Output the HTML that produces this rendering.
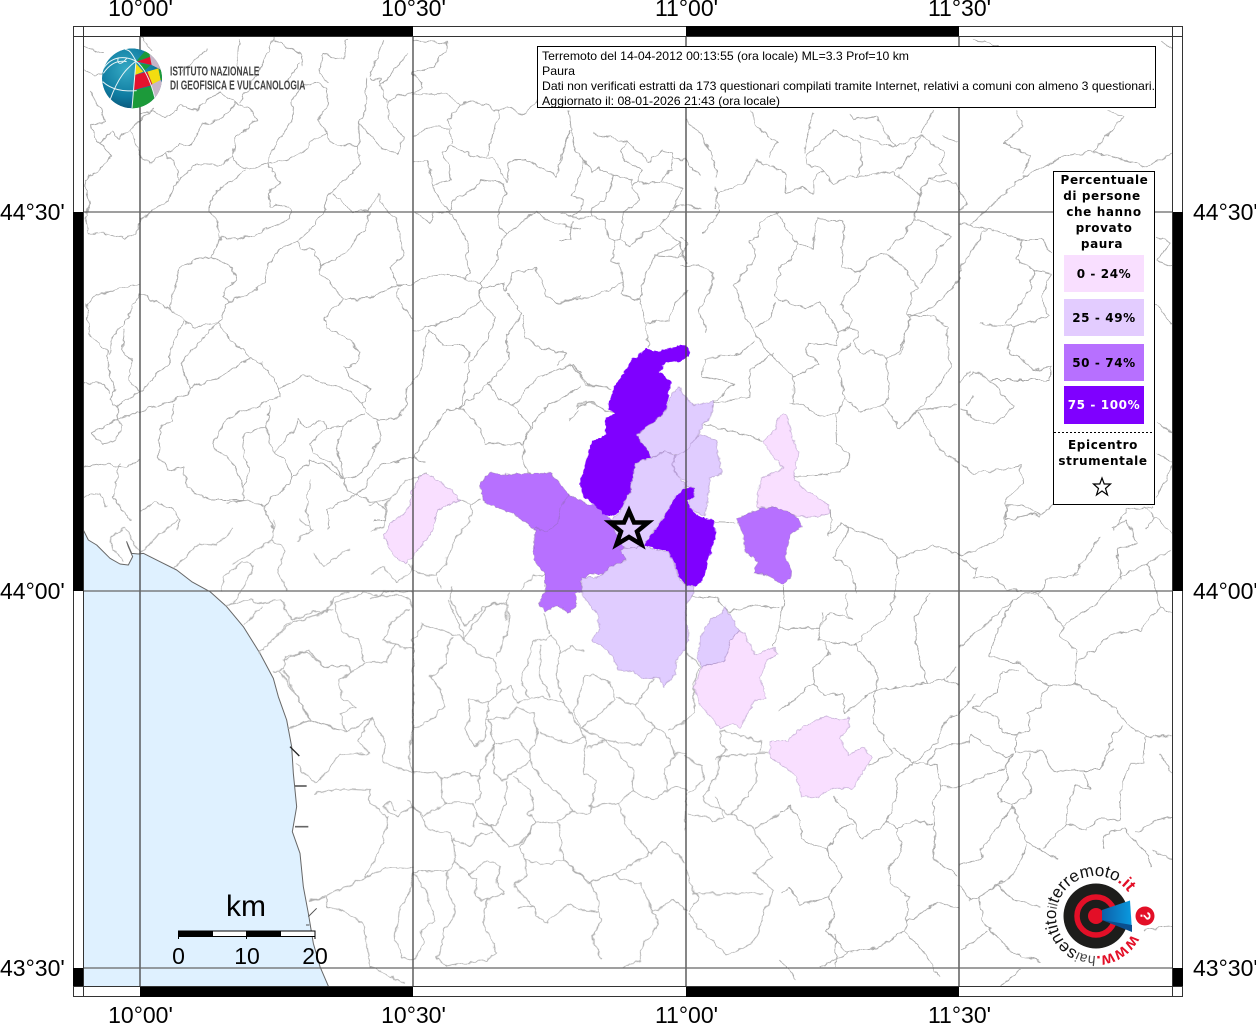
<!DOCTYPE html>
<html lang="it"><head><meta charset="utf-8"><title>Terremoto - Paura</title>
<style>
html,body{margin:0;padding:0;background:#fff}
svg{display:block}
.l{font-family:"Liberation Sans",Arial,sans-serif;font-size:23px;fill:#000}
.d{font-family:"DejaVu Sans",sans-serif;font-weight:bold;font-size:12px;text-anchor:middle;letter-spacing:.6px;fill:#000}
.t{font-family:"Liberation Sans",Arial,sans-serif;font-size:12px;fill:#000}
.n path{fill:none}
</style></head><body>
<svg width="1256" height="1024" viewBox="0 0 1256 1024" xmlns="http://www.w3.org/2000/svg">
<defs>
<clipPath id="m"><rect x="83" y="36" width="1090" height="951"/></clipPath>
<clipPath id="g"><circle cx="216" cy="235" r="90"/></clipPath>
<radialGradient id="gb" cx=".4" cy=".35" r=".75"><stop offset="0" stop-color="#35a9c4"/><stop offset=".6" stop-color="#0f7ba0"/><stop offset="1" stop-color="#0a4c6e"/></radialGradient>
<linearGradient id="cone" x1="0" y1="0" x2="1" y2="0"><stop offset="0" stop-color="#0d5fa8"/><stop offset="1" stop-color="#0a9be0"/></linearGradient>
<path id="arc" d="M1131.600,934.200 A40,40 0 1 1 1131.950,933.500"/>
<filter id="w" filterUnits="userSpaceOnUse" x="0" y="0" width="1256" height="1024" color-interpolation-filters="sRGB"><feTurbulence type="fractalNoise" baseFrequency=".13" numOctaves="2" seed="3" result="n"/><feDisplacementMap in="SourceGraphic" in2="n" scale="6" xChannelSelector="R" yChannelSelector="G"/></filter>
<filter id="w2" filterUnits="userSpaceOnUse" x="0" y="0" width="1256" height="1024" color-interpolation-filters="sRGB"><feTurbulence type="fractalNoise" baseFrequency=".2" numOctaves="2" seed="5" result="n"/><feDisplacementMap in="SourceGraphic" in2="n" scale="4" xChannelSelector="R" yChannelSelector="G"/></filter>
</defs>
<rect width="1256" height="1024" fill="#fff"/>
<g clip-path="url(#m)">
<g transform="translate(60,520) scale(.33333)">
<path d="M70,30L85,60 110,75 150,115 180,132 205,135 218,110 205,80 200,65 215,100 235,102 250,100 300,125 350,150 395,185 450,215 500,260 550,320 600,400 640,475 655,530 680,600 695,680 700,760 710,860 697,935 720,1000 730,1100 745,1180 760,1270 780,1340 810,1410 40,1410 40,30Z" fill="#dff1ff" stroke="#666" stroke-width="3" stroke-linejoin="round"/>
<path d="M690,680L718,708" stroke="#222" stroke-width="4" fill="none"/>
<path d="M705,798H740M705,920H745" stroke="#666" stroke-width="5" fill="none"/>
<path d="M745,1190L770,1165M738,1215h10" stroke="#555" stroke-width="3" fill="none"/>
</g>
<g filter="url(#w)"><g class="n" stroke="#aaa" stroke-width="2.800" stroke-linejoin="round">
<g transform="translate(80,30) scale(.33333)">
<path d="M180,250L215,245 260,265 300,225 350,240 385,205 420,190 470,215 510,240 528,265 505,295 470,320 462,350 458,380 480,410 510,418 560,400 590,340 635,275 640,240 635,210 665,170 710,155 740,175 745,230 712,270 740,310 740,325 770,345 838,348"/>
<path d="M180,375L210,400 255,372 300,345 335,345 365,285 420,270 470,215"/>
<path d="M255,372L290,410 295,450 340,410 370,402 410,410 458,380"/>
<path d="M497,420L460,450 410,485 390,520 390,545 410,570 420,620 470,628 520,615 625,570 635,545 610,525 570,530 565,490 600,460 575,420 560,400"/>
<path d="M295,450L265,510 210,550 180,565 170,610 135,625 80,610 25,610 15,560 30,520 12,450"/>
<path d="M560,400L620,390 685,355 690,335 740,310"/>
<path d="M838,348L838,400 810,435 760,480 735,520 730,550 700,590 650,635 600,655 560,710 550,760 510,790 445,815 425,795 470,745 455,715 395,680 345,690 300,710 285,770 270,835"/>
<path d="M425,620L395,680M445,815L415,880"/>
<path d="M650,635L665,655 700,660 722,710 720,730 760,770 790,808 870,805 950,765 930,710 970,680 960,620 950,570 920,545 895,490 865,540 820,545 760,490"/>
<path d="M838,280L900,350 955,370 970,320 925,270 925,215 960,195 1000,190"/>
<path d="M860,145L855,250 838,280 838,348"/>
<path d="M722,710L810,660 820,630 855,600 870,545"/>
<path d="M790,808L735,860 735,895 790,915 840,965 825,1005 795,1010 810,1040 870,1075 850,1120 860,1150 895,1168 950,1165 978,1130 980,1080 1000,1060 1020,1030 1045,900"/>
<path d="M1000,760L1040,740 1100,730 1200,760 1200,810 1140,860 1045,890 1000,905"/>
<path d="M950,765L1000,765M955,770L950,800 1000,870"/>
<path d="M180,790L205,805 270,835 315,875 345,890 415,880 450,930 510,980 545,1000 600,1075 670,1035 760,1070 800,1075 850,1125"/>
<path d="M180,765L120,775 50,795 20,820 25,910 85,970 85,1020 105,1080 90,1110 110,1130 180,1085 270,995 270,960 310,875"/>
<path d="M180,790L135,880 100,910 90,970M135,895L125,960 155,990 145,1050 180,1085"/>
<path d="M415,880L385,905 305,1000 325,1075 410,1045 510,985"/>
<path d="M325,1075L325,1095 250,1120 180,1145 120,1165"/>
<path d="M600,1075L600,1105 575,1105 540,1130 470,1150 435,1175 395,1245 460,1300 490,1370 490,1410 440,1420"/>
<path d="M10,1060L70,1060 90,1090M110,1130L110,1160 125,1190 105,1235 70,1240 30,1210 120,1165"/>
<path d="M280,1120L280,1170 240,1195 235,1280 265,1320 310,1310 320,1370 360,1400 400,1410 490,1410"/>
<path d="M570,1130L560,1190 580,1270 620,1290 635,1345 690,1290 740,1310 790,1345 830,1340 870,1290 900,1220 890,1168"/>
<path d="M490,1220L485,1260 510,1320 490,1370M490,1220L540,1190 560,1190"/>
<path d="M580,1270L640,1200 650,1170 680,1190 730,1170 740,1195 790,1185 850,1150"/>
<path d="M740,1195L690,1240 700,1270 760,1300 790,1345 800,1380 830,1400 900,1305 930,1300 1000,1280 1035,1300"/>
<path d="M790,1185L770,1250 790,1340M635,1345L630,1360 570,1410 555,1435 580,1500M490,1410L555,1430"/>
<path d="M690,1350L680,1430 690,1500M740,1440L745,1500M740,1440L830,1395 910,1430 920,1470 880,1470"/>
<path d="M180,1290L140,1310 60,1300 10,1310M180,1445L230,1415 280,1440 300,1470 290,1500M120,1300L100,1400 150,1470M10,1400L60,1390 80,1430"/>
<path d="M1000,1280L1100,1140 1140,1135 1200,1190 1215,1240 1330,1245 1330,1300 1350,1330"/>
<path d="M1140,1135L1225,1060 1260,1110 1300,1125 1375,1040 1480,1005 1500,1030"/>
<path d="M1200,775L1270,760 1280,780 1300,730 1370,715 1400,800 1435,820 1500,800"/>
<path d="M1280,790L1325,850 1280,920 1285,990 1225,1060M1330,855L1335,920 1390,960 1460,970 1430,1005"/>
<path d="M1200,810L1245,860 1220,930 1170,1000 1150,1100 1140,1135M1045,900L1090,945 1150,945 1170,965 1150,1000"/>
<path d="M1300,1125L1350,1190 1330,1245 1365,1170 1400,1130 1500,1070"/>
<path d="M1000,545L1050,580 1060,550 1110,545 1165,640 1160,690 1170,730 1150,745M1110,545L1065,490 1060,465 1110,450 1105,400 1085,370 1110,345 1200,385 1240,380 1280,455 1290,390 1340,390 1430,440 1470,300M1000,395L1045,395 1060,465"/>
<path d="M1000,320L1050,290 1110,295 1115,340M1000,195L1100,190 1140,225 1105,270 1115,295M1140,225L1180,210 1260,245 1220,375M1260,245L1280,230 1330,255 1370,210"/>
<path d="M1270,460L1200,450 1190,470 1120,510 1110,545M1270,460L1280,490 1255,540 1255,590 1280,615 1350,555 1370,545 1410,575M1280,615L1250,670 1255,690 1200,760M1410,575L1500,600"/>
<path d="M1000,30L1100,40 1100,60 1060,110 1000,130 1030,170 1000,190"/>
<path d="M185,20L215,60M10,50L70,70M10,120L40,135 70,130M30,180L60,230 75,275 30,285 60,340 95,375 70,410 30,440 12,455M60,340L95,305 120,325 150,300 180,375M150,300L180,270 220,235"/>
<path d="M480,30L470,90 480,130M580,20L550,100 510,170 480,215M800,30L790,90 730,70 720,130 745,160M910,30L870,140M870,145L900,150 920,220M985,70L900,170M380,60L300,130M660,100L620,150M580,30L660,70 670,110"/>
</g>
<g transform="translate(680,30) scale(.33333)">
<path d="M230,390L320,430 315,490 370,475 400,490 400,450 430,420 460,465 500,440 530,440 640,425 720,495 745,445 825,460 860,520 835,545"/>
<path d="M230,390L190,460 110,490 105,540M105,470L120,545 70,610"/>
<path d="M375,380L380,400 430,420M375,380L460,300 540,340 545,400 530,440M540,320L640,350 725,315 790,370 780,405 800,430 745,445"/>
<path d="M725,315L695,370 650,425M790,320L835,335"/>
<path d="M300,545L240,575 235,620 210,630 230,680 165,765 190,850 180,830 225,910M290,545L350,640 400,655 410,565 490,575 495,630 480,650 490,710 540,730 560,690 620,670 680,720 690,750 715,770 690,790 695,825 680,850 690,870 670,930 650,975 620,985 575,965 545,970 520,935 540,905 510,895"/>
<path d="M350,640L335,690 300,710 285,800 320,815 380,835 420,810 475,910 470,945 385,940 380,970 415,1000 340,1040 310,1010 280,985 225,910"/>
<path d="M285,820L270,860 225,895M480,820L515,870 510,895 470,910M480,820L500,790 530,760 540,735"/>
<path d="M620,985L620,1030 630,1100 610,1125 660,1195 715,1140 780,1060 810,1010 800,890 760,860 680,855M690,860L660,975"/>
<path d="M475,975L480,1035 495,1100 470,1150M475,975L510,940M495,1105L540,1145 610,1125M465,1150L470,1240 510,1270 500,1300 480,1330M470,1150L420,1160 370,1125 325,1120M340,1040L340,1120"/>
<path d="M280,970L210,1020 205,1100 100,1120M70,1180L120,1195 250,1230M60,1180L100,1130"/>
<path d="M225,930L185,970 75,985 70,1040 160,1060 100,1120M80,905L55,840 100,760 100,730 60,705 0,710M0,680L25,640 0,625"/>
<path d="M340,1340L480,1330M660,1195L710,1140 830,1125M715,1145L750,1210 780,1260 835,1300M840,1300L880,1330 1020,1310 1030,1360 975,1410 980,1470 1060,1450 1080,1460 1120,1420"/>
<path d="M840,580L920,595 1030,630 1085,630 1115,670M1030,630L1010,690 1060,720 1115,730 1085,800 1105,860 1000,890 900,880M1060,720L1050,780 1000,850 975,880M920,595L840,720 838,750 760,830 690,860"/>
<path d="M1005,890L980,960 1040,1000 1060,1020 1110,1010 1110,1050 930,1050 880,1020 870,1040M930,1050L1000,1130 940,1185 870,1160 860,1145 840,1140M870,1020L840,1060M880,1100L860,1130"/>
<path d="M720,570L700,570 670,620 620,660M720,570L815,620 770,660 765,700 720,760M700,570L720,490M870,585L1030,440 1150,380 1240,365 1330,260 1280,240M1010,240L1030,290 975,340 1050,380 1030,430M1240,365L1400,410 1480,370"/>
<path d="M1430,620L1470,640 1430,690 1480,710M1430,820L1480,890M1430,1180L1480,1210M1430,1270L1480,1300 1430,1400M1420,1460L1400,1500M1300,1500L1340,1440 1420,1430"/>
<path d="M215,240L230,290 290,340 265,380M400,250L370,370M510,250L520,270 590,260 620,320 650,350M760,240L720,310M1440,30L1480,60M880,30L960,50M20,270L60,310 100,380 110,440"/>
</g>
<g transform="translate(780,500) scale(.33333)">
<path d="M150,30L155,75 145,110 180,70 210,85 310,120 355,175 460,135 538,165M355,175L345,280 330,340 230,430 215,435"/>
<path d="M210,85L160,170 210,205 230,280M200,280L200,340 215,355 145,340 120,385 0,385"/>
<path d="M120,385L115,420 135,425 225,435 295,520 285,570 195,640M135,430L150,460 100,500 100,550 40,600 0,630M100,550L130,585 190,580 195,640"/>
<path d="M285,570L440,550 410,440 405,350 450,280M440,550L490,535 538,555M500,535L530,500"/>
<path d="M285,570L280,665 340,760 270,795M340,745L400,790 470,730 500,660 535,640 585,585M400,790L350,825 350,890 320,965 245,1020 220,960 160,885"/>
<path d="M400,790L470,795 485,860 540,860 670,805 700,760M485,860L460,910 465,1000 460,1075 535,1130M440,795L470,745 535,730M320,965L350,985 410,960 460,975M350,985L365,1055 325,1100 330,1150 385,1190 380,1265 470,1210 538,1225"/>
<path d="M0,935L30,920 60,960 65,1020 140,1050 185,1130 145,1190 60,1215 30,1165 0,1180M140,1050L185,980 220,975M145,1190L165,1235 140,1290 205,1360 300,1340 375,1290 380,1265M375,1290L440,1370 480,1430M205,1360L120,1400M165,1300L170,1400"/>
<path d="M538,175L590,205 580,235 640,230 680,270 780,275M538,440L600,390 700,300 735,280 775,280 850,380 840,410 890,450 885,550M700,300L650,400 625,470 720,490 785,550 850,560 885,550 1010,625 1040,670 1100,710 1180,710"/>
<path d="M780,280L800,240 900,220M890,490L1000,400 1080,390 1140,320 1180,340M850,375L950,310 1020,230 1100,190 1130,270 1140,320M1010,150L1025,240M880,230L960,110"/>
<path d="M538,165L590,150 670,110 680,20 720,10 780,45M1010,150L1070,130 1040,60 1000,80M1100,190L1175,150M1090,20L1180,100"/>
<path d="M660,530L670,515 720,510M660,530L650,575 580,625 650,650 665,695 708,705 750,690 745,640 785,620 790,580 810,555M708,705L708,760M570,700L640,750 680,770 700,760M535,730L570,730 570,700"/>
<path d="M708,755L790,755 820,815 900,810 960,810 1000,700 1030,680M960,810L970,770 1000,750"/>
<path d="M700,760L675,800 685,830 655,880 665,910 700,915 760,870 730,820 750,760M700,915L720,985 740,1025 800,1060 830,1075M700,920L600,1050 610,1075 540,1095M740,1030L715,1100 690,1130 600,1190 655,1155"/>
<path d="M910,815L930,865 890,855 860,920 860,970 790,1045M860,970L920,990 960,955 1020,960M1020,960L1020,880 1050,790 1090,790 1095,710M970,1050L975,1000 1030,985 1070,1030 1110,1070 1110,1100M1070,1000L1130,960 1180,950M1115,1050L1180,1080M1140,760L1180,830"/>
<path d="M655,1155L700,1200 780,1220M600,1190L610,1270 700,1360 780,1385M625,1295L540,1350M535,1155L570,1200 600,1190M1090,1290L1180,1280M720,1410L660,1460M0,1380L50,1440"/>
</g>
<g transform="translate(280,590) scale(.33333)">
<path d="M400,150L425,100 470,115 555,145M555,145L620,45 685,40M505,30L555,145 590,190 640,205 660,270 650,310M685,40L685,120 650,200"/>
<path d="M400,150L400,415 430,405 495,350 480,300 450,260 500,220 500,170 520,140M400,415L385,500 400,550M400,550L450,545 490,565 550,545 595,560 640,465 630,385M490,565L480,600 495,640 430,680 400,650"/>
<path d="M640,465L710,450 750,490 775,430 760,370 710,350 690,380 620,390M565,325L625,340 615,450 585,470 555,425 570,380 565,325M625,340L650,310 690,290 710,340 760,320 800,325"/>
<path d="M640,465L640,550 670,570 750,510M750,490L750,510 785,570 835,610 880,660 890,670 930,670 950,570 910,550 915,480 915,440 870,460 780,430"/>
<path d="M760,150L750,200 720,270 750,320M760,150L800,150 815,135 840,180 830,250 850,340M840,190L870,170 910,185M780,165L780,260 810,320"/>
<path d="M915,255L880,370 905,415 1005,330 990,280 940,255 915,255M800,325L850,340 915,440M905,415L975,450 1060,540 1055,605 1120,630 1185,590 1220,600M920,475L975,450 1080,465 1125,410 1065,350 1010,320M1125,410L1160,430 1185,490 1220,490M1065,350L1120,265M1185,490L1150,550 1165,600"/>
<path d="M700,560L750,600 760,660 745,670 770,695 835,700 850,810M835,695L880,660M930,650L1015,640 1055,605M1015,640L1040,710 1115,790 1150,750 1215,820M770,695L720,760 690,770 645,725 590,670 580,710M770,695L720,770 735,810M590,670L575,640 490,640M680,570L675,640 650,710 595,700M595,560L600,610 585,640M735,810L790,825 850,810 930,880 1000,850 1040,835 1110,785"/>
<path d="M850,810L930,875 955,930 955,965 900,960 860,945 800,1000 770,980 760,950 710,950M735,810L735,860 700,885 760,950M930,880L1000,850 1020,865 1080,880 1120,965 1135,1000 1080,1080 1085,1110 1030,1130M1120,965L1180,930 1220,960M955,965L965,990 935,1040 965,1110"/>
<path d="M520,745L525,810 500,845 400,845M520,815L570,855 620,810 660,830 650,875 670,910 620,930 585,920 590,870 565,855M620,930L610,1000 650,1090 620,1110 500,1130 470,1100M500,845L500,900 525,950 520,985 490,1020 490,1060 470,1110"/>
<path d="M400,650L450,720 510,730 525,770M520,745L570,770 590,740 640,730M400,845L445,920 465,990 425,1020 430,1060 400,1110 370,1100 345,1050 360,950 395,895 400,845"/>
<path d="M400,835L320,830 255,865 180,900 85,935M255,865L300,780 325,680M325,685L265,630 270,600 190,595 105,610"/>
<path d="M45,520L110,580 180,495 270,490 235,450 275,385 320,460 305,515 400,550M275,385L200,425 90,390 25,415M90,385L0,240M200,425L180,370 230,350 190,330 175,270 215,250 200,225 130,230 85,180 10,210M215,250L250,220 315,215 350,165 400,180M250,215L240,150 190,130 160,40 250,10 380,20 395,50M350,165L310,150 335,95 385,60M160,60L40,95 0,130"/>
<path d="M380,630L400,650 350,680 310,650 330,635 350,660M85,935L140,920 140,950 190,965 250,1000 265,1080 270,1130 300,1140 370,1180"/>
<path d="M1220,610L1215,720M1220,190L1260,230 1240,285 1240,370 1215,395 1165,420M1220,830L1235,900 1260,920 1225,965M1225,970L1270,1030 1340,1095 1420,1060 1480,900 1420,850 1475,800 1420,715 1355,675 1280,640 1270,620 1310,560 1320,500 1440,490 1465,490M1425,715L1500,670M1355,675L1430,580 1430,500M1320,420L1445,455 1440,490M1320,420L1320,460 1340,480 1310,510M1225,675L1280,680 1300,695 1330,680 1310,620M1225,610L1270,570 1265,530 1215,500M1235,910L1320,910 1450,910"/>
</g>
<g transform="translate(370,335) scale(.33333)">
<path d="M605,90L650,150 725,160M620,215L650,200 730,235"/>
<path d="M165,415L100,445 60,490 45,515 50,545 40,575 5,590M60,490L0,510M268,495L305,510 330,495M305,510L300,560 260,600 225,690 195,725 130,710 115,690"/>
<path d="M125,690L120,710 80,745 40,695 0,720M200,730L215,765M245,750L240,790 270,845 285,875 340,815 410,800 420,770M450,765L490,725 525,715M410,800L410,860M130,770L40,770 0,790M540,895L520,835"/>
</g>
<g transform="translate(560,100) scale(.33333)">
<path d="M25,30L35,90 45,150 100,215 115,205 160,225 215,240 220,270 240,300 190,340 180,420 210,440 250,400 295,380 360,430 380,490"/>
<path d="M100,95L110,105 205,125 185,155 190,180 250,210 220,260M205,125L265,185 310,150 335,160 335,205 305,240 265,255 235,240"/>
<path d="M305,240L365,265 340,320 355,320 380,315 420,325M350,320L295,380M70,180L55,240 35,290 70,300 60,330 35,350"/>
<path d="M160,225L135,300 95,325 95,350 40,350 0,340M95,350L130,360 150,420 165,425 155,485 180,495 190,545M165,425L180,420"/>
<path d="M190,545L150,570 90,590 40,600 0,605M190,545L185,585 240,600 255,670 265,740M240,600L255,530 285,465 375,470M285,465L360,430M380,570L340,620 330,660 255,670M35,360L30,420 0,420M30,90L0,180M335,175L380,180 400,210 420,225"/>
</g>
<g transform="translate(570,335) scale(.33333)">
<path d="M430,560L500,562M640,750L642,800 630,880 610,930M355,780L440,790 480,830 560,810 630,820M630,880L750,880 760,830M0,90L60,150 125,160M20,220L60,200 110,225M0,260L25,225"/>
</g>
<g transform="translate(60,520) scale(.33333)">
<path d="M240,100L300,40 355,0M240,100L195,25 150,50 160,85 190,125M340,145L420,70 470,75 520,25M485,215L490,170 550,125 580,140 560,185 520,250M500,255L580,240 600,250 660,240 695,300 760,275 800,280 820,230 870,215M550,320L575,290 610,260M600,400L690,305M640,455L670,445 675,410 740,395 790,440 860,435M670,450L750,600 690,625M750,600L840,630M640,0L640,60 675,90 655,150 680,210M640,60L520,130M710,60L760,30 720,0M760,100L790,140 830,110 870,85"/>
</g>
</g></g>
<g filter="url(#w2)"><g stroke="#8a6aa8" stroke-opacity=".45" stroke-width="2.400" stroke-linejoin="round">
<g transform="translate(370,335) scale(.33333)">
<path fill="#b770ff" d="M330,450L360,410 395,420 470,415 540,415 570,445 595,478 640,500 655,512 672,508 715,545 745,590 770,670 700,720 660,715 632,740 640,770 615,775 622,805 595,835 565,810 525,830 505,805 525,770 525,715 490,675 495,585 430,535 345,505 335,480Z"/>
<path fill="none" d="M595,478L570,520 565,565 530,590 495,580"/>
<path fill="#f9dfff" d="M165,415L215,445 245,465 268,495 205,525 180,600 130,660 105,685 70,665 40,600 60,565 100,540 120,510 125,470 150,425Z"/>
</g>
<g transform="translate(570,335) scale(.33333)">
<path fill="#7f00ff" stroke="none" d="M230,40L258,50 300,40 330,30 355,32 358,65 330,78 285,85 268,110 303,140 295,185 283,235 275,250 235,270 200,300 245,365 195,385 180,470 155,520 130,545 105,540 75,510 45,490 28,450 50,370 65,320 105,300 108,250 135,235 113,222 130,160 170,100 180,78Z"/>
<path fill="#e0ccff" d="M325,155L345,185 370,210 432,198 420,250 395,270 385,300 345,360 310,358 285,350 245,368 200,300 283,235 300,185Z"/>
<path fill="#e0ccff" d="M390,298L437,315 445,360 455,415 420,430 412,510 402,545 360,520 355,490 372,488 372,458 345,455 350,440 320,420 308,390 315,362 345,350 370,320Z"/>
<path fill="#e0ccff" d="M285,350L315,362 308,390 320,420 345,445 340,472 310,495 295,525 262,570 222,635 165,640 155,630 140,600 120,560 150,530 180,470 195,385 245,368Z"/>
<path fill="#e0ccff" d="M165,640L222,635 295,652 312,685 330,735 350,752 372,755 368,780 350,810 345,850 358,905 345,945 320,975 315,1020 282,1055 268,1030 215,1030 190,1010 145,1005 130,970 100,935 65,915 90,880 80,835 35,780 35,730 90,725 120,695 170,675 150,645Z"/>
<path fill="#7f00ff" stroke="none" d="M340,460L372,458 372,488 352,497 360,520 395,550 430,555 438,605 412,680 405,720 380,755 350,752 330,730 312,680 295,650 222,632 262,575 295,525 310,495Z"/>
<path fill="#f9dfff" d="M640,235L650,240 665,300 685,355 670,430 700,460 775,510 780,535 745,545 690,545 640,530 605,515 560,520 565,470 575,430 640,400 612,370 580,320 615,285 620,260Z"/>
<path fill="#b770ff" d="M502,553L560,525 605,515 650,530 680,545 697,575 660,600 645,665 663,700 660,730 638,748 590,720 550,715 565,680 525,650 520,600Z"/>
<path fill="#f9dfff" d="M505,885L525,895 555,960 610,938 625,958 590,975 570,1030 590,1090 555,1095 510,1180 490,1165 450,1180 425,1150 390,1110 372,1055 395,995 465,975 480,920Z"/>
<path fill="#e0ccff" d="M465,812L505,885 480,920 465,975 395,995 380,970 395,900 420,855 455,835Z"/>
<path fill="#f9dfff" d="M600,1220L650,1218 700,1175 765,1145 810,1155 838,1150 838,1175 810,1210 835,1262 880,1235 905,1270 880,1310 850,1360 790,1360 740,1388 695,1385 680,1325 640,1295 600,1265Z"/>
</g>
</g></g>
<path d="M140,36V987M413,36V987M686,36V987M959,36V987" stroke="#444" stroke-width="1.300" fill="none"/>
<path d="M83,212H1173M83,591H1173M83,968H1173" stroke="#666" stroke-width="1.300" fill="none"/>
<polygon points="629,511 634,522.500 648,522.500 637,531.500 641.500,544.500 629,537 616.500,544.500 621,531.500 610,522.500 624,522.500" fill="none" stroke="#000" stroke-width="4.500" stroke-linejoin="miter"/>
</g>
<rect x="73.500" y="26.500" width="1109" height="970" fill="none" stroke="#333"/>
<g fill="#000">
<rect x="140" y="26" width="273" height="10"/><rect x="686" y="26" width="273" height="10"/>
<rect x="140" y="987" width="273" height="10"/><rect x="686" y="987" width="273" height="10"/>
<rect x="73" y="212" width="10" height="379"/><rect x="73" y="968" width="10" height="19"/>
<rect x="1173" y="212" width="10" height="379"/><rect x="1173" y="968" width="10" height="19"/>
</g>
<path d="M83.500,26V997M1172.500,26V997M73,36.500H1183M73,986.500H1183" stroke="#333" fill="none"/>
<g class="l" text-anchor="middle">
<text x="140.500" y="16">10°00'</text><text x="413.500" y="16">10°30'</text><text x="686.500" y="16">11°00'</text><text x="959.500" y="16">11°30'</text>
<text x="140.500" y="1023">10°00'</text><text x="413.500" y="1023">10°30'</text><text x="686.500" y="1023">11°00'</text><text x="959.500" y="1023">11°30'</text>
</g>
<g class="l">
<text x="0" y="220">44°30'</text><text x="0" y="599">44°00'</text><text x="0" y="976">43°30'</text>
<text x="1193" y="220">44°30'</text><text x="1193" y="599">44°00'</text><text x="1193" y="976">43°30'</text>
</g>
<g>
<rect x="178.500" y="931" width="136.500" height="5.500" fill="#fff" stroke="#000"/>
<rect x="178.500" y="931" width="34.500" height="5.500"/><rect x="246.500" y="931" width="34.500" height="5.500"/>
<path d="M178.500,931V939M246.500,931V939M315,931V939" stroke="#000" fill="none"/>
<text x="246" y="916" text-anchor="middle" style="font:30px 'Liberation Sans',Arial,sans-serif">km</text>
<g class="l" text-anchor="middle"><text x="178.500" y="964">0</text><text x="247" y="964">10</text><text x="315" y="964">20</text></g>
</g>
<g transform="translate(60,0) scale(.33333)">
<g clip-path="url(#g)">
<circle cx="216" cy="235" r="90" fill="url(#gb)"/>
<polygon points="228,185 262,145 300,145 272,170" fill="#1c9a3a"/>
<polygon points="230,185 272,170 275,195" fill="#e3122e"/>
<polygon points="268,160 310,190 310,215 295,205 275,195" fill="#c6b6c8"/>
<polygon points="228,190 250,215 225,225" fill="#f3dd10"/>
<polygon points="240,190 272,195 250,215" fill="#1c9a3a"/>
<polygon points="225,225 262,215 278,255 222,270" fill="#e3122e"/>
<polygon points="262,215 295,205 302,240 278,255" fill="#f3dd10"/>
<polygon points="302,240 310,260 285,298 272,255" fill="#c6b6c8"/>
<polygon points="220,272 275,258 283,295 250,330 216,330" fill="#1c9a3a"/>
<polygon points="296,205 310,215 310,240 302,240" fill="#1c9a3a"/>
<g fill="none" stroke="#e8f4f6" stroke-width="3">
<path d="M228,183C190,165 150,170 128,210M228,183C200,205 175,230 150,300M228,183L216,325M228,183C215,160 210,150 195,148M230,272C190,275 155,270 128,245M228,183C250,200 270,235 285,295M175,172C170,190 180,200 200,175M130,220C150,190 175,180 200,185"/>
</g>
</g>
<g fill="#444" font-weight="bold" style="font-family:'Liberation Sans',Arial,sans-serif;font-size:39px">
<text x="330" y="226" textLength="268" lengthAdjust="spacingAndGlyphs">ISTITUTO NAZIONALE</text>
<text x="330" y="269" textLength="406" lengthAdjust="spacingAndGlyphs">DI GEOFISICA E VULCANOLOGIA</text>
</g>
</g>
<rect x="537.500" y="46.500" width="618" height="61" fill="#fff" stroke="#000"/>
<g class="t">
<text x="542" y="60" textLength="367" lengthAdjust="spacingAndGlyphs">Terremoto del 14-04-2012 00:13:55 (ora locale) ML=3.3 Prof=10 km</text>
<text x="542" y="75" textLength="33" lengthAdjust="spacingAndGlyphs">Paura</text>
<text x="542" y="90" textLength="613" lengthAdjust="spacingAndGlyphs">Dati non verificati estratti da 173 questionari compilati tramite Internet, relativi a comuni con almeno 3 questionari.</text>
<text x="542" y="105" textLength="238" lengthAdjust="spacingAndGlyphs">Aggiornato il: 08-01-2026 21:43 (ora locale)</text>
</g>
<rect x="1053.500" y="171.500" width="101" height="333" fill="#fff" stroke="#000"/>
<rect x="1064" y="255" width="80" height="37" fill="#f9dfff"/>
<rect x="1064" y="299" width="80" height="37" fill="#e3ccff"/>
<rect x="1064" y="344" width="80" height="37" fill="#b770ff"/>
<rect x="1064" y="386" width="80" height="38" fill="#7f00ff"/>
<path d="M1054,432.500H1154" stroke="#000" stroke-dasharray="2 2" fill="none"/>
<g class="d">
<text x="1104.500" y="184">Percentuale</text>
<text x="1102" y="200">di persone</text>
<text x="1104" y="216">che hanno</text>
<text x="1104" y="232">provato</text>
<text x="1102" y="248">paura</text>
<text x="1104" y="278">0 - 24%</text>
<text x="1104" y="322">25 - 49%</text>
<text x="1104" y="367">50 - 74%</text>
<text x="1104" y="409" style="fill:#fff">75 - 100%</text>
<text x="1103" y="449">Epicentro</text>
<text x="1103" y="465">strumentale</text>
</g>
<polygon points="1102,478 1104.200,484 1110.500,484 1105.500,488.500 1107.500,495 1102,491 1096.500,495 1098.500,488.500 1093.500,484 1099.800,484" fill="#fff" stroke="#000" stroke-width="1.200"/>
<g>
<circle cx="1096" cy="916" r="32.500" fill="#1d1d1b"/>
<circle cx="1096" cy="916" r="19" fill="none" stroke="#e30f27" stroke-width="5.500"/>
<circle cx="1096" cy="916" r="8" fill="#e30f27"/>
<polygon points="1102,910 1130,900.500 1132,931 1102,920" fill="url(#cone)"/>
<polygon points="1102,920 1132,925 1132,932" fill="#0b4f8e"/>
<circle cx="1145" cy="916" r="9.500" fill="#e30f27"/>
<text transform="translate(1140.500,916) rotate(90)" text-anchor="middle" y="0" style="font:bold 15px 'Liberation Sans',Arial,sans-serif;fill:#fff">?</text>
<text style="font-family:'Liberation Sans',Arial,sans-serif;font-size:17px;fill:#111"><textPath href="#arc" startOffset="0"><tspan fill="#e30f27" font-weight="bold">www.</tspan><tspan font-size="14" fill="#444">hai</tspan><tspan>sentito</tspan><tspan font-size="13" fill="#555">il</tspan><tspan>terremoto</tspan><tspan fill="#e30f27" font-weight="bold">.it</tspan></textPath></text>
</g>
</svg>
</body></html>
